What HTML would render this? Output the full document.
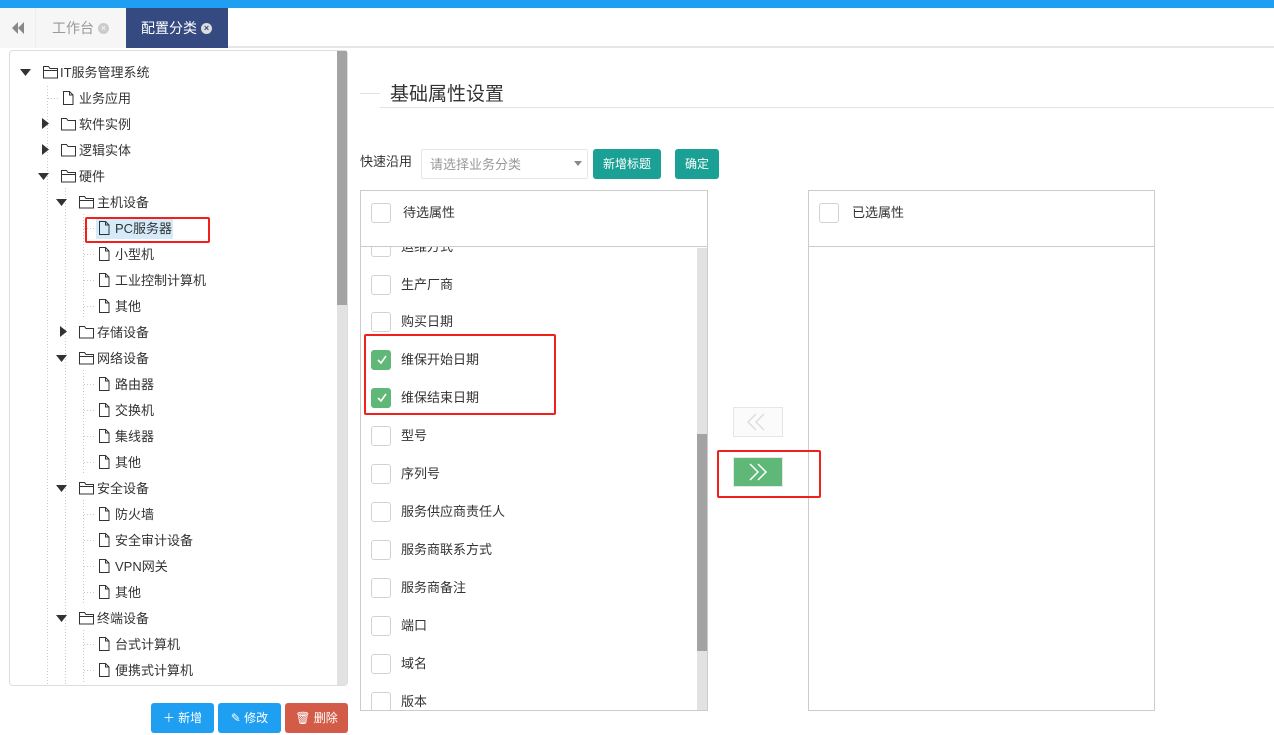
<!DOCTYPE html>
<html><head><meta charset="utf-8">
<style>
*{margin:0;padding:0;box-sizing:border-box}
body{width:1274px;height:735px;overflow:hidden;background:#fff;font-family:"Liberation Sans","Noto Sans CJK SC",sans-serif;color:#333;position:relative}
.a{position:absolute}
.t{position:absolute;font-size:13px;line-height:16px;white-space:nowrap;color:#333}
.cb{position:absolute;width:20px;height:20px;border:1px solid #d2d2d2;border-radius:3px;background:#fff}
.cb.on{background:#5fb878;border-color:#5fb878}
.li{position:absolute;font-size:13px;line-height:16px;color:#333}
.btn{position:absolute;color:#fff;font-size:12px;text-align:center;border-radius:3px}
.red{position:absolute;border:2px solid #f0201a;border-radius:2px}
</style></head><body>
<div class="a" style="left:0;top:0;width:1274px;height:8px;background:#1e9ff2"></div>
<div class="a" style="left:0;top:8px;width:1274px;height:40px;background:#fff;border-bottom:2px solid #e6e6e6"></div>
<div class="a" style="left:0;top:8px;width:36px;height:40px;background:#f6f6f6;border-right:1px solid #eee"></div>
<svg class="a" style="left:11px;top:22px" width="14" height="12"><path d="M7 0L1 6L7 12zM13 0L7 6L13 12z" fill="#888"/></svg>
<div class="a" style="left:36px;top:8px;width:90px;height:40px;background:#f6f6f6"></div>
<div class="t" style="left:52px;top:20px;font-size:14px;color:#999">工作台</div>
<div class="a" style="left:98px;top:23px;width:11px;height:11px;border-radius:50%;background:#ccc;color:#fff;font-size:9px;line-height:11px;text-align:center">×</div>
<div class="a" style="left:126px;top:8px;width:102px;height:40px;background:#344a80"></div>
<div class="t" style="left:141px;top:20px;font-size:14px;color:#fff">配置分类</div>
<div class="a" style="left:201px;top:23px;width:11px;height:11px;border-radius:50%;background:#ddd;color:#344a80;font-size:9px;line-height:11px;text-align:center;font-weight:bold">×</div>

<div class="a" style="left:9px;top:50px;width:339px;height:636px;border:1px solid #ddd;border-radius:4px"></div>
<div class="a" style="left:337px;top:51px;width:10px;height:634px;background:#e2e2e2"></div>
<div class="a" style="left:337px;top:51px;width:10px;height:254px;background:#a3a3a3"></div>

<svg class="a" style="left:0;top:0" width="336" height="684">
<defs>
<g id="fo"><path d="M0.5 0.5h5l1.5 2h7.5v9.5h-14z M0.5 4.5h14" fill="none" stroke="#333"/></g>
<g id="fc"><path d="M0.5 0.5h5l1.5 2h7.5v9.5h-14z" fill="none" stroke="#333"/></g>
<g id="pg"><path d="M0.5 0.5h6l3.5 3.5v9.5h-9.5z M6.5 0.5v3.5h3.5" fill="none" stroke="#333"/></g>
</defs>
<g stroke="#c8c8c8" stroke-dasharray="1,2">
<line x1="47.5" y1="86" x2="47.5" y2="684"/>
<line x1="48" y1="98.5" x2="60" y2="98.5"/>
<line x1="65.5" y1="188" x2="65.5" y2="684"/>
<line x1="83.5" y1="214" x2="83.5" y2="318"/>
<line x1="83.5" y1="370" x2="83.5" y2="474"/>
<line x1="83.5" y1="500" x2="83.5" y2="604"/>
<line x1="83.5" y1="630" x2="83.5" y2="684"/>
<line x1="84" y1="228.5" x2="96" y2="228.5"/><line x1="84" y1="254.5" x2="96" y2="254.5"/><line x1="84" y1="280.5" x2="96" y2="280.5"/><line x1="84" y1="306.5" x2="96" y2="306.5"/>
<line x1="84" y1="384.5" x2="96" y2="384.5"/><line x1="84" y1="410.5" x2="96" y2="410.5"/><line x1="84" y1="436.5" x2="96" y2="436.5"/><line x1="84" y1="462.5" x2="96" y2="462.5"/>
<line x1="84" y1="514.5" x2="96" y2="514.5"/><line x1="84" y1="540.5" x2="96" y2="540.5"/><line x1="84" y1="566.5" x2="96" y2="566.5"/><line x1="84" y1="592.5" x2="96" y2="592.5"/>
<line x1="84" y1="644.5" x2="96" y2="644.5"/><line x1="84" y1="670.5" x2="96" y2="670.5"/>
</g>
<rect x="96" y="218" width="77" height="21" fill="#d6ebfa"/>
<g fill="#333">
<path d="M20 69h11l-5.5 7z"/>
<path d="M42 118v11l7-5.5z"/><path d="M42 144v11l7-5.5z"/>
<path d="M38 173h11l-5.5 7z"/>
<path d="M56 199h11l-5.5 7z"/>
<path d="M60 326v11l7-5.5z"/>
<path d="M56 355h11l-5.5 7z"/>
<path d="M56 485h11l-5.5 7z"/>
<path d="M56 615h11l-5.5 7z"/>
</g>
<use href="#fo" x="43" y="66"/>
<use href="#pg" x="63" y="91"/>
<use href="#fc" x="61" y="118"/><use href="#fc" x="61" y="144"/><use href="#fo" x="61" y="170"/>
<use href="#fo" x="79" y="196"/><use href="#fc" x="79" y="326"/><use href="#fo" x="79" y="352"/><use href="#fo" x="79" y="482"/><use href="#fo" x="79" y="612"/>
<use href="#pg" x="99" y="221"/><use href="#pg" x="99" y="247"/><use href="#pg" x="99" y="273"/><use href="#pg" x="99" y="299"/>
<use href="#pg" x="99" y="377"/><use href="#pg" x="99" y="403"/><use href="#pg" x="99" y="429"/><use href="#pg" x="99" y="455"/>
<use href="#pg" x="99" y="507"/><use href="#pg" x="99" y="533"/><use href="#pg" x="99" y="559"/><use href="#pg" x="99" y="585"/>
<use href="#pg" x="99" y="637"/><use href="#pg" x="99" y="663"/>
</svg>
<div class="t" style="left:60px;top:65px">IT服务管理系统</div>
<div class="t" style="left:79px;top:91px">业务应用</div>
<div class="t" style="left:79px;top:117px">软件实例</div>
<div class="t" style="left:79px;top:143px">逻辑实体</div>
<div class="t" style="left:79px;top:169px">硬件</div>
<div class="t" style="left:97px;top:195px">主机设备</div>
<div class="t" style="left:115px;top:221px">PC服务器</div>
<div class="t" style="left:115px;top:247px">小型机</div>
<div class="t" style="left:115px;top:273px">工业控制计算机</div>
<div class="t" style="left:115px;top:299px">其他</div>
<div class="t" style="left:97px;top:325px">存储设备</div>
<div class="t" style="left:97px;top:351px">网络设备</div>
<div class="t" style="left:115px;top:377px">路由器</div>
<div class="t" style="left:115px;top:403px">交换机</div>
<div class="t" style="left:115px;top:429px">集线器</div>
<div class="t" style="left:115px;top:455px">其他</div>
<div class="t" style="left:97px;top:481px">安全设备</div>
<div class="t" style="left:115px;top:507px">防火墙</div>
<div class="t" style="left:115px;top:533px">安全审计设备</div>
<div class="t" style="left:115px;top:559px">VPN网关</div>
<div class="t" style="left:115px;top:585px">其他</div>
<div class="t" style="left:97px;top:611px">终端设备</div>
<div class="t" style="left:115px;top:637px">台式计算机</div>
<div class="t" style="left:115px;top:663px">便携式计算机</div>
<div class="red" style="left:85px;top:217px;width:125px;height:26px"></div>

<div class="btn" style="left:151px;top:703px;width:63px;height:30px;background:#1e9ff2;line-height:30px">＋ 新增</div>
<div class="btn" style="left:218px;top:703px;width:63px;height:30px;background:#1e9ff2;line-height:30px">✎ 修改</div>
<div class="btn" style="left:285px;top:703px;width:63px;height:30px;background:#d35c48;line-height:30px">🗑 删除</div>

<div class="a" style="left:360px;top:93px;width:20px;height:1px;background:#e2e2e2"></div>
<div class="a" style="left:380px;top:107px;width:894px;height:1px;background:#e2e2e2"></div>
<div class="t" style="left:390px;top:83px;font-size:19px;line-height:24px">基础属性设置</div>

<div class="t" style="left:360px;top:154px">快速沿用</div>
<div class="a" style="left:421px;top:149px;width:167px;height:30px;border:1px solid #e6e6e6;border-radius:2px"></div>
<div class="t" style="left:430px;top:157px;color:#999">请选择业务分类</div>
<div class="a" style="left:574px;top:161px;width:0;height:0;border-left:4px solid transparent;border-right:4px solid transparent;border-top:5px solid #888"></div>
<div class="btn" style="left:593px;top:149px;width:68px;height:30px;background:#1aa094;line-height:30px">新增标题</div>
<div class="btn" style="left:675px;top:149px;width:44px;height:30px;background:#1aa094;line-height:30px">确定</div>

<div class="a" style="left:360px;top:190px;width:348px;height:521px;border:1px solid #ccc;overflow:hidden">
  <div class="a" style="left:0;top:56px;width:346px;height:470px">
    <div class="cb" style="left:10px;top:-10px"></div><div class="li" style="left:40px;top:-8px">运维方式</div>
    <div class="cb" style="left:10px;top:28px"></div><div class="li" style="left:40px;top:30px">生产厂商</div>
    <div class="cb" style="left:10px;top:65px"></div><div class="li" style="left:40px;top:67px">购买日期</div>
    <div class="cb on" style="left:10px;top:103px"></div><div class="li" style="left:40px;top:105px">维保开始日期</div>
    <div class="cb on" style="left:10px;top:141px"></div><div class="li" style="left:40px;top:143px">维保结束日期</div>
    <div class="cb" style="left:10px;top:179px"></div><div class="li" style="left:40px;top:181px">型号</div>
    <div class="cb" style="left:10px;top:217px"></div><div class="li" style="left:40px;top:219px">序列号</div>
    <div class="cb" style="left:10px;top:255px"></div><div class="li" style="left:40px;top:257px">服务供应商责任人</div>
    <div class="cb" style="left:10px;top:293px"></div><div class="li" style="left:40px;top:295px">服务商联系方式</div>
    <div class="cb" style="left:10px;top:331px"></div><div class="li" style="left:40px;top:333px">服务商备注</div>
    <div class="cb" style="left:10px;top:369px"></div><div class="li" style="left:40px;top:371px">端口</div>
    <div class="cb" style="left:10px;top:407px"></div><div class="li" style="left:40px;top:409px">域名</div>
    <div class="cb" style="left:10px;top:445px"></div><div class="li" style="left:40px;top:447px">版本</div>
  </div>
  <div class="a" style="left:0;top:0;width:346px;height:56px;background:#fff;border-bottom:1px solid #ccc"></div>
  <div class="cb" style="left:10px;top:12px"></div><div class="li" style="left:42px;top:14px">待选属性</div>
  <div class="a" style="left:336px;top:57px;width:10px;height:464px;background:#e2e2e2"></div>
  <div class="a" style="left:336px;top:243px;width:10px;height:217px;background:#a3a3a3"></div>
</div>
<svg class="a" style="left:375px;top:351px" width="14" height="60"><path d="M3 9l3 3l5-7M3 47l3 3l5-7" fill="none" stroke="#fff" stroke-width="1.6"/></svg>

<div class="a" style="left:808px;top:190px;width:347px;height:521px;border:1px solid #ccc">
  <div class="a" style="left:0;top:0;width:345px;height:56px;border-bottom:1px solid #ccc"></div>
  <div class="cb" style="left:10px;top:12px"></div><div class="li" style="left:43px;top:14px">已选属性</div>
</div>

<div class="a" style="left:733px;top:407px;width:50px;height:30px;border:1px solid #e6e6e6;background:#fbfbfb"></div>
<svg class="a" style="left:733px;top:407px" width="50" height="30"><path d="M23 7l-8 8l8 8M31 7l-8 8l8 8" fill="none" stroke="#ddd" stroke-width="1.5"/></svg>
<div class="a" style="left:733px;top:457px;width:50px;height:30px;background:#5fb878;border:1px solid #e6e6e6"></div>
<svg class="a" style="left:733px;top:457px" width="50" height="30"><path d="M17 7l8 8l-8 8M25 7l8 8l-8 8" fill="none" stroke="#fff" stroke-width="1.5"/></svg>

<div class="red" style="left:364px;top:334px;width:192px;height:81px"></div>
<div class="red" style="left:717px;top:450px;width:104px;height:48px"></div>
</body></html>
